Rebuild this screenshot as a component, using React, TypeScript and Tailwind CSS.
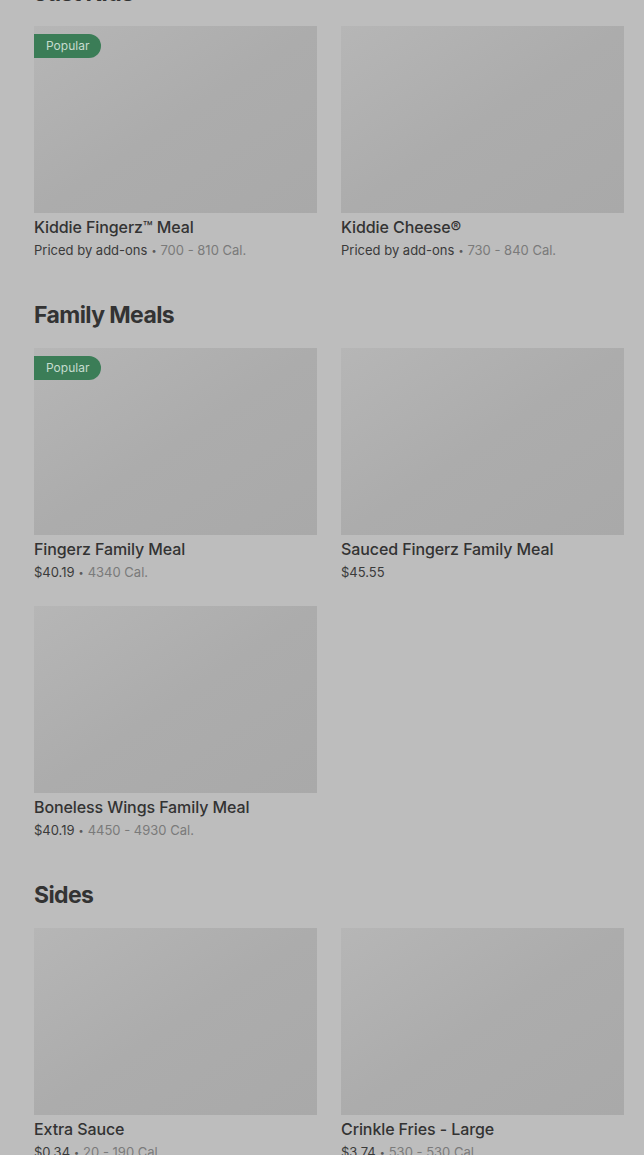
import React from 'react';

interface MenuItem {
  name: string;
  price: string;
  cal?: string;
  popular?: boolean;
}

interface Section {
  title: string;
  items: MenuItem[];
}

const sections: Section[] = [
  {
    title: 'Just Kids',
    items: [
      { name: 'Kiddie Fingerz™ Meal', price: 'Priced by add-ons', cal: '700 - 810 Cal.', popular: true },
      { name: 'Kiddie Cheese®', price: 'Priced by add-ons', cal: '730 - 840 Cal.' },
    ],
  },
  {
    title: 'Family Meals',
    items: [
      { name: 'Fingerz Family Meal', price: '$40.19', cal: '4340 Cal.', popular: true },
      { name: 'Sauced Fingerz Family Meal', price: '$45.55' },
      { name: 'Boneless Wings Family Meal', price: '$40.19', cal: '4450 - 4930 Cal.' },
    ],
  },
  {
    title: 'Sides',
    items: [
      { name: 'Extra Sauce', price: '$0.34', cal: '20 - 190 Cal.' },
      { name: 'Crinkle Fries - Large', price: '$3.74', cal: '530 - 530 Cal.' },
    ],
  },
];

const ItemCard: React.FC<{ item: MenuItem }> = ({ item }) => (
  <div className="flex flex-col">
    <div className="relative h-[187px] bg-gradient-to-br from-[#b6b6b6] via-[#acacac] to-[#a9a9a9]">
      {item.popular && (
        <span className="absolute left-0 top-[8px] flex h-[24px] items-center rounded-r-full bg-[#3b7d57] pl-[12px] pr-[12px] text-[12px] text-[#c6dccf]">
          Popular
        </span>
      )}
    </div>
    <div className="mt-[4px] h-[20px] text-[16px] leading-[20px] font-medium tracking-[-0.1px] text-[#333333]">{item.name}</div>
    <div className="mt-[3px] flex h-[20px] items-center text-[13px] leading-[20px] text-[#3a3a3a]">
      <span>{item.price}</span>
      {item.cal && (
        <>
          <span className="mx-[4px] text-[9px] leading-none text-[#5a5a5a]">•</span>
          <span className="text-[#7a7a7a]">{item.cal}</span>
        </>
      )}
    </div>
  </div>
);

export default function App() {
  return (
    <div className="min-h-[1155px] overflow-hidden bg-[#bdbdbd] font-['Inter',sans-serif]">
      <div className="-mt-[23px] pl-[34px] pr-[20px]">
        {sections.map((section, i) => (
          <div key={section.title} className={i === 0 ? '' : 'mt-[39px]'}>
            <h2 className="h-[32px] text-[23px] leading-[32px] font-bold tracking-[-0.6px] text-[#333333]">
              {section.title}
            </h2>
            <div className="mt-[17px] grid grid-cols-2 gap-x-[24px] gap-y-[24px]">
              {section.items.map((item) => (
                <ItemCard key={item.name} item={item} />
              ))}
            </div>
          </div>
        ))}
      </div>
    </div>
  );
}
